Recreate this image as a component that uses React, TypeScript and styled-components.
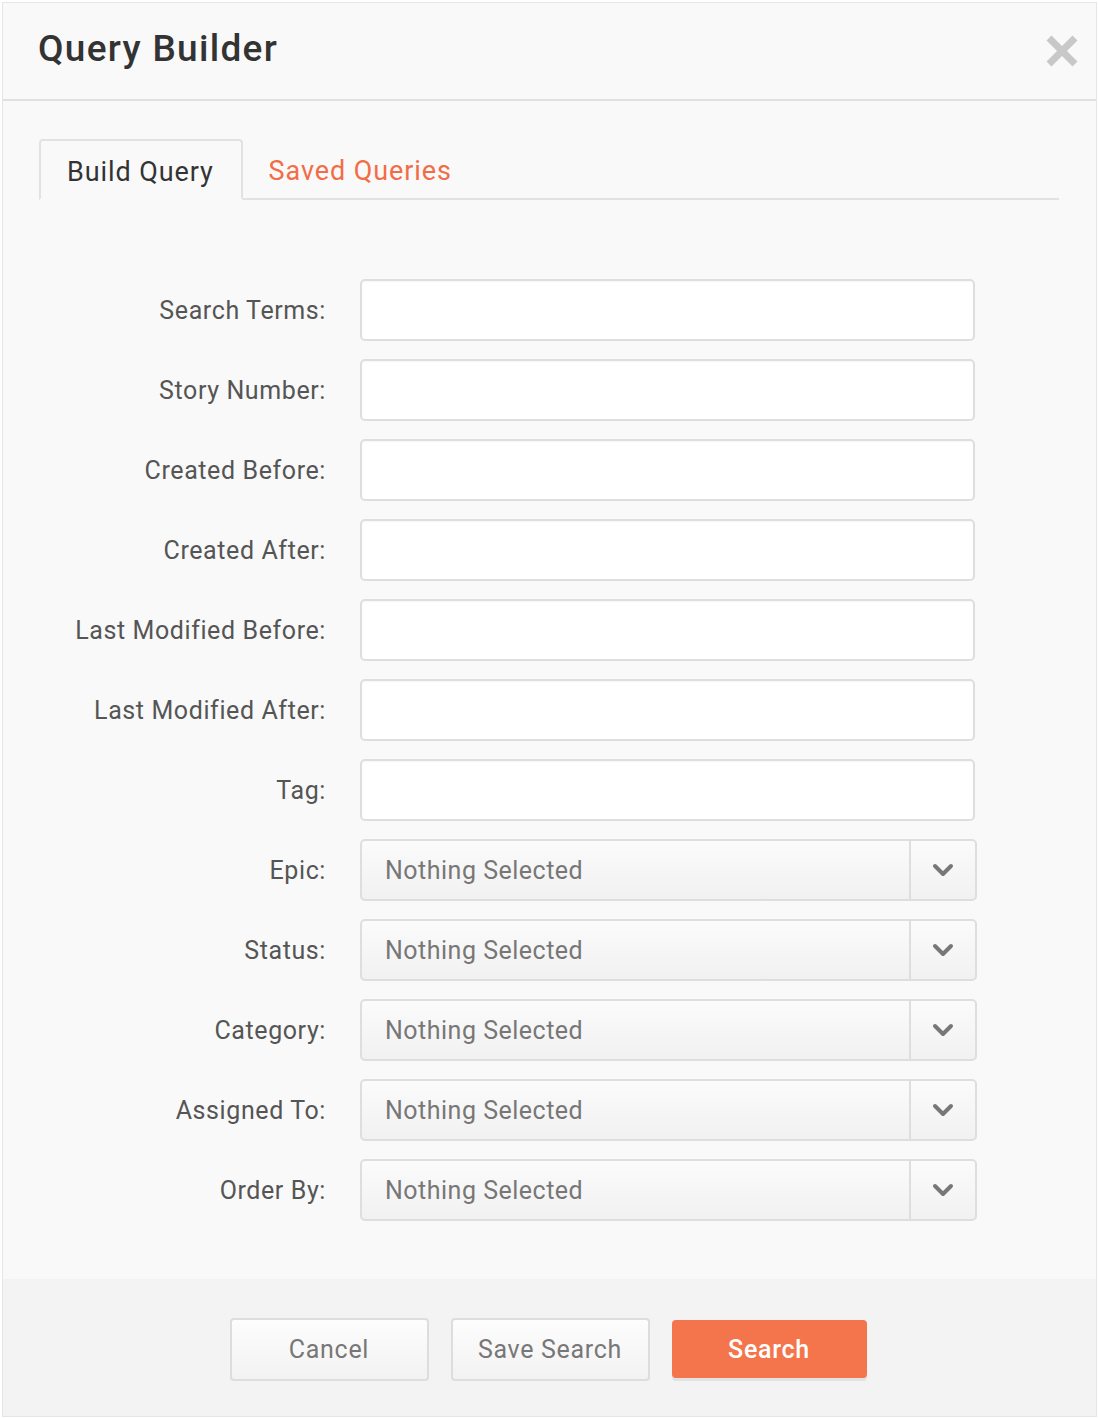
import styled, { createGlobalStyle } from 'styled-components';

const GlobalStyle = createGlobalStyle`
  html, body {
    margin: 0;
    padding: 0;
    background: #ffffff;
    font-family: Roboto, "Liberation Sans", sans-serif;
  }
  * {
    box-sizing: border-box;
  }
`;

const Modal = styled.div`
  width: 1095px;
  height: 1415px;
  margin: 2px 0 0 2px;
  border: 1px solid #e6e6e6;
  background-color: #f9f9f9;
  display: flex;
  flex-direction: column;
`;

const Header = styled.div`
  height: 98px;
  flex-shrink: 0;
  display: flex;
  align-items: center;
  justify-content: space-between;
  padding: 0 15px 0 35px;
  border-bottom: 2px solid #e0e0e0;
`;

const Title = styled.h1`
  margin: 0 0 6px;
  font-size: 37px;
  font-weight: 500;
  color: #333333;
  letter-spacing: 1.3px;
`;

const CloseButton = styled.button`
  width: 38px;
  height: 38px;
  border: none;
  padding: 0;
  background: transparent;
  cursor: pointer;
  display: flex;
  align-items: center;
  justify-content: center;
`;

const Body = styled.div`
  flex: 1;
  padding: 38px 37px 0 36px;
  display: flex;
  flex-direction: column;
`;

const Tabs = styled.div`
  display: flex;
  align-items: flex-end;
  height: 61px;
  border-bottom: 2px solid #e2e2e2;
`;

const Tab = styled.div<{ active?: boolean }>`
  height: ${props => (props.active ? '61px' : '59px')};
  margin-bottom: ${props => (props.active ? '-2px' : '0')};
  padding: 4px 27px 0 ${props => (props.active ? '26px' : '24px')};
  display: flex;
  align-items: center;
  font-size: 27px;
  letter-spacing: 0.9px;
  color: ${props => (props.active ? '#333333' : '#f26d46')};
  background-color: #f9f9f9;
  border: 2px solid ${props => (props.active ? '#e2e2e2' : 'transparent')};
  border-bottom-color: ${props => (props.active ? '#f9f9f9' : 'transparent')};
  border-radius: 4px 4px 0 0;
`;

const Form = styled.div`
  margin-top: 79px;
  display: flex;
  flex-direction: column;
  gap: 18px;
`;

const Row = styled.div`
  display: flex;
  align-items: center;
`;

const Label = styled.label`
  width: 287px;
  text-align: right;
  font-size: 25px;
  letter-spacing: 0.6px;
  color: #555555;
  margin-right: 34px;
  white-space: nowrap;
`;

const TextInput = styled.input`
  width: 615px;
  height: 62px;
  border: 2px solid #dedede;
  border-radius: 5px;
  background: #ffffff;
  box-shadow: inset 0 1px 2px rgba(0, 0, 0, 0.04);
  outline: none;
  font-size: 24px;
  padding: 0 20px;
`;

const Select = styled.div`
  width: 617px;
  height: 62px;
  border: 2px solid #dedede;
  border-radius: 5px;
  background: linear-gradient(to bottom, #fbfbfb 0%, #f1f1f1 100%);
  display: flex;
  align-items: stretch;
`;

const SelectText = styled.div`
  flex: 1;
  display: flex;
  align-items: center;
  padding-left: 23px;
  font-size: 25px;
  letter-spacing: 0.5px;
  color: #777777;
  border-right: 2px solid #dedede;
`;

const Caret = styled.div`
  width: 64px;
  display: flex;
  align-items: center;
  justify-content: center;
`;

const Footer = styled.div`
  height: 137px;
  flex-shrink: 0;
  background-color: #f3f3f3;
  display: flex;
  justify-content: center;
  align-items: center;
  gap: 22px;
  padding: 3px 3px 0 0;
`;

const Button = styled.button<{ primary?: boolean }>`
  width: ${props => (props.primary ? '195px' : '199px')};
  height: ${props => (props.primary ? '58px' : '63px')};
  border: ${props => (props.primary ? 'none' : '2px solid #dddddd')};
  border-radius: 4px;
  background: ${props => (props.primary
    ? '#f4754b'
    : 'linear-gradient(to bottom, #fdfdfd 0%, #f2f2f2 100%)')};
  box-shadow: ${props => (props.primary ? '0 3px 0 #e2e2e2' : 'none')};
  color: ${props => (props.primary ? '#ffffff' : '#777777')};
  font-family: Roboto, "Liberation Sans", sans-serif;
  font-size: 25px;
  letter-spacing: 0.7px;
  font-weight: ${props => (props.primary ? 500 : 400)};
  cursor: pointer;
  padding: 0;
`;

const textFields = [
  'Search Terms:',
  'Story Number:',
  'Created Before:',
  'Created After:',
  'Last Modified Before:',
  'Last Modified After:',
  'Tag:',
];

const selectFields = ['Epic:', 'Status:', 'Category:', 'Assigned To:', 'Order By:'];

const ChevronDown = () => (
  <svg width="24" height="16" viewBox="0 0 24 16">
    <path d="M4 4 L12 12 L20 4" fill="none" stroke="#777777" strokeWidth="4" strokeLinecap="round" strokeLinejoin="round" />
  </svg>
);

const CloseIcon = () => (
  <svg width="36" height="36" viewBox="0 0 36 36">
    <path d="M5 5 L31 31 M31 5 L5 31" stroke="#c8c8c8" strokeWidth="7" strokeLinecap="butt" />
  </svg>
);

const App = () => {
  return (
    <>
      <GlobalStyle />
      <Modal>
        <Header>
          <Title>Query Builder</Title>
          <CloseButton aria-label="Close">
            <CloseIcon />
          </CloseButton>
        </Header>
        <Body>
          <Tabs>
            <Tab active>Build Query</Tab>
            <Tab>Saved Queries</Tab>
          </Tabs>
          <Form>
            {textFields.map(label => (
              <Row key={label}>
                <Label>{label}</Label>
                <TextInput type="text" />
              </Row>
            ))}
            {selectFields.map(label => (
              <Row key={label}>
                <Label>{label}</Label>
                <Select>
                  <SelectText>Nothing Selected</SelectText>
                  <Caret>
                    <ChevronDown />
                  </Caret>
                </Select>
              </Row>
            ))}
          </Form>
        </Body>
        <Footer>
          <Button>Cancel</Button>
          <Button>Save Search</Button>
          <Button primary>Search</Button>
        </Footer>
      </Modal>
    </>
  );
};

export default App;
